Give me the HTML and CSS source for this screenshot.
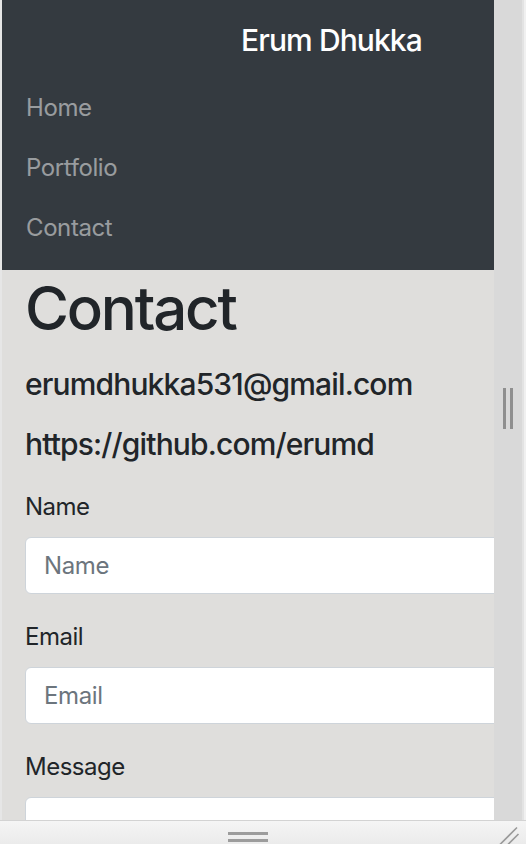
FILE: index.html
```html
<!DOCTYPE html>
<html lang="en">
<head>
<meta charset="utf-8">
<title>Contact - Erum Dhukka</title>
<link rel="stylesheet" href="styles.css">
</head>
<body>
<div class="frame">
  <div class="top">
    <div class="edge"></div>
    <div class="viewport">
      <nav class="navbar">
        <div class="brand-row"><a class="brand" href="#">Erum Dhukka</a></div>
        <ul class="nav">
          <li><a class="nav-link" href="#">Home</a></li>
          <li><a class="nav-link" href="#">Portfolio</a></li>
          <li><a class="nav-link" href="#">Contact</a></li>
        </ul>
      </nav>
      <main class="container">
        <h1 class="title">Contact</h1>
        <h5 class="info">erumdhukka531@gmail.com</h5>
        <h5 class="info">https://github.com/erumd</h5>
        <form class="form">
          <div class="group">
            <label class="label" for="name">Name</label>
            <input class="control" id="name" type="text" placeholder="Name">
          </div>
          <div class="group">
            <label class="label" for="email">Email</label>
            <input class="control" id="email" type="email" placeholder="Email">
          </div>
          <div class="group">
            <label class="label" for="msg">Message</label>
            <textarea class="control area" id="msg" rows="4"></textarea>
          </div>
        </form>
      </main>
    </div>
    <div class="vhandle"><span class="vbar"></span><span class="vbar"></span></div>
  </div>
  <div class="bottom">
    <div class="bedge"></div>
    <div class="bmid"><div class="hgrip"><span class="hbar"></span><span class="hbar"></span></div></div>
    <div class="corner">
      <svg width="32" height="24" viewBox="0 0 32 24"><path d="M5 24.5 L23 6.5 M13 24.5 L24.5 13" stroke="#9a9a9a" stroke-width="1.6" fill="none"/></svg>
    </div>
  </div>
</div>
</body>
</html>
```
FILE: styles.css
```css
html, body {
  margin: 0;
  padding: 0;
}
body {
  width: 526px;
  height: 844px;
  overflow: hidden;
  font-family: Inter, "Liberation Sans", sans-serif;
  color: #212529;
  background: #f0f0f0;
}
.frame {
  display: flex;
  flex-direction: column;
  height: 844px;
}
.top {
  display: flex;
  height: 820px;
}
.edge {
  width: 2px;
  background: #e6e6e6;
}
.viewport {
  width: 492px;
  overflow: hidden;
  background: #dfdedc;
}
.vhandle {
  width: 30px;
  background: #d9d9d9;
  border-right: 2px solid #e3e3e3;
  display: flex;
  align-items: center;
  justify-content: center;
  gap: 4px;
  padding-bottom: 3px;
  box-sizing: border-box;
}
.vbar {
  width: 3px;
  height: 41px;
  background: #8f8f8f;
}
.navbar {
  background: #343a40;
  padding: 12px 24px;
}
.brand-row {
  padding: 6px 0 9px 215px;
  height: 45px;
  font-size: 30px;
  line-height: 45px;
}
.brand {
  display: block;
  font-size: 30px;
  line-height: 45px;
  font-weight: 500;
  letter-spacing: -0.9px;
  color: #fff;
  text-decoration: none;
  white-space: nowrap;
}
.nav {
  list-style: none;
  margin: 6px 0 0;
  padding: 0;
}
.nav-link {
  display: block;
  padding: 12px 0;
  font-size: 24px;
  line-height: 36px;
  letter-spacing: -0.4px;
  color: rgba(255, 255, 255, 0.5);
  text-decoration: none;
}
.container {
  width: 600px;
  padding: 0 23px;
}
.title {
  margin: 2px 0 22px;
  font-size: 60px;
  line-height: 72px;
  font-weight: 500;
  letter-spacing: -2.2px;
}
.info {
  margin: 0 0 24px;
  font-size: 30px;
  line-height: 36px;
  font-weight: 500;
  letter-spacing: -0.85px;
}
.form {
  margin-top: 27px;
}
.group {
  margin-bottom: 25px;
}
.label {
  display: block;
  font-size: 24px;
  line-height: 36px;
  letter-spacing: -0.5px;
  margin-bottom: 12px;
}
.control {
  display: block;
  box-sizing: border-box;
  width: 100%;
  height: 57px;
  padding: 9px 18px;
  font-family: inherit;
  font-size: 24px;
  line-height: 36px;
  letter-spacing: -0.4px;
  color: #495057;
  background: #fff;
  border: 1px solid #ced4da;
  border-radius: 6px;
  outline: none;
}
.control::placeholder {
  color: #6c757d;
}
.area {
  height: 160px;
  resize: none;
}
.bottom {
  display: flex;
  height: 24px;
  box-sizing: border-box;
  border-top: 1px solid #d3d3d3;
  background: linear-gradient(#f5f5f5, #ebebeb);
}
.bedge {
  width: 2px;
}
.bmid {
  width: 492px;
  display: flex;
  justify-content: center;
}
.hgrip {
  display: flex;
  flex-direction: column;
  gap: 4px;
  padding-top: 11px;
}
.hbar {
  width: 40px;
  height: 3px;
  background: #9c9c9c;
}
.corner {
  width: 32px;
  display: flex;
  align-items: flex-end;
}
.corner svg {
  display: block;
  margin-bottom: -1px;
}
```
